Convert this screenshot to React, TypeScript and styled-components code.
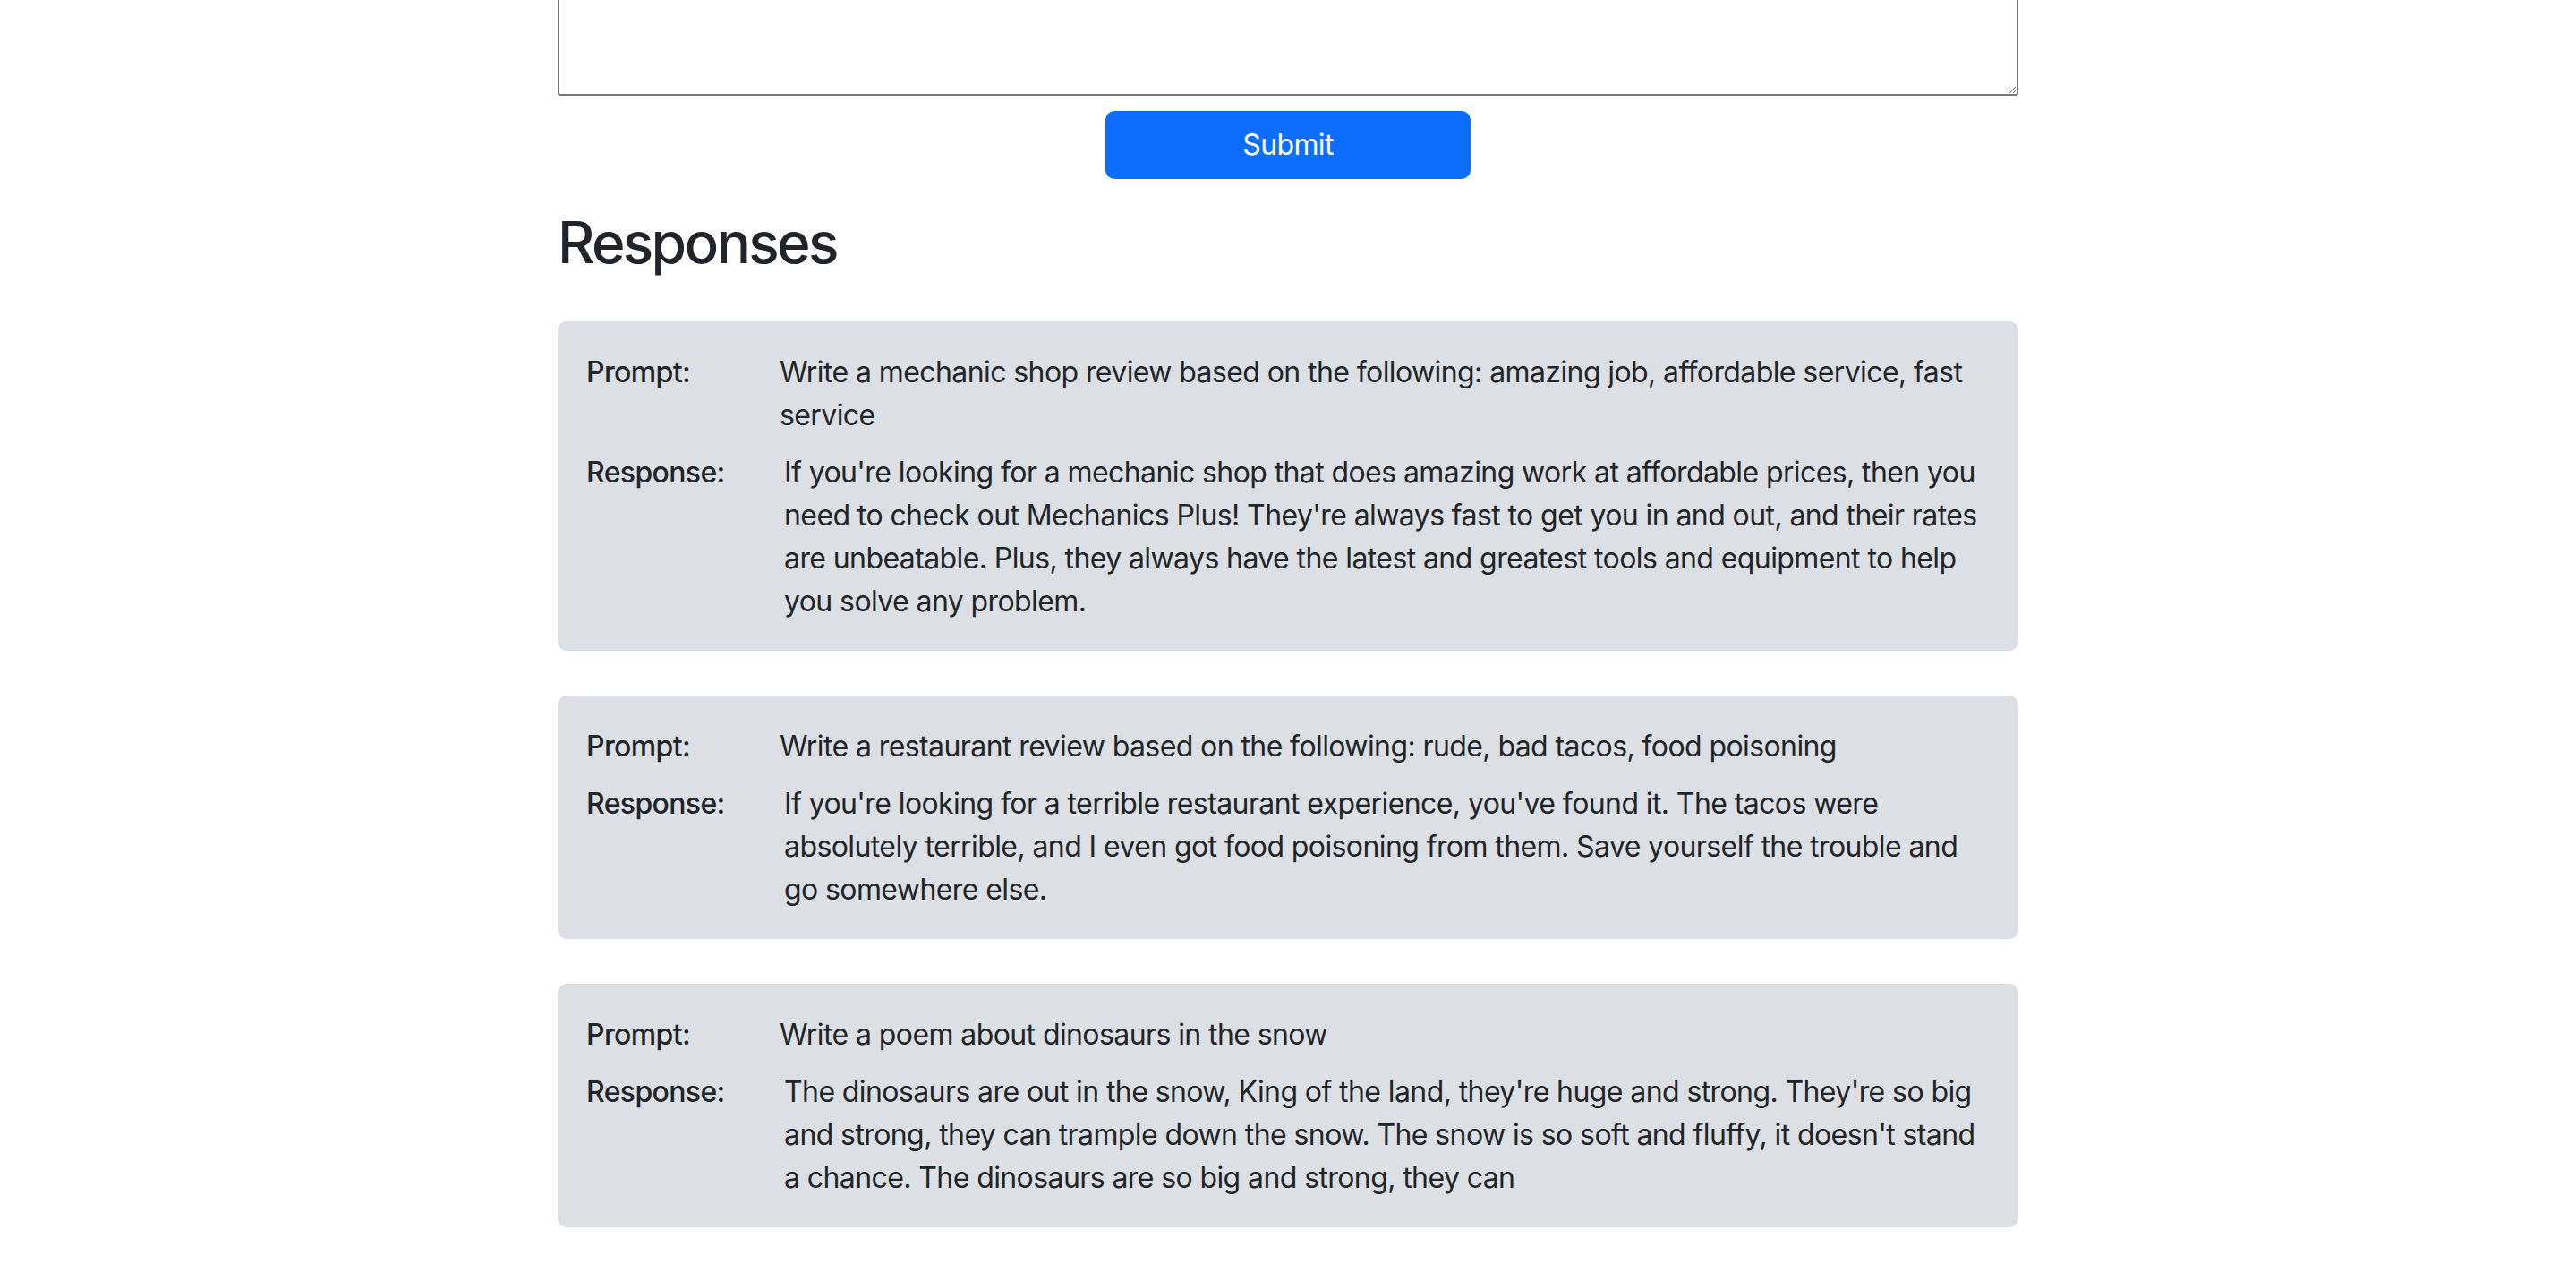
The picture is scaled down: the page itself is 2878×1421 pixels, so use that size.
import React from "react";
import styled, { createGlobalStyle } from "styled-components";

const GlobalStyle = createGlobalStyle`
  html, body {
    margin: 0;
    padding: 0;
    background: #ffffff;
  }
  body {
    font-family: Inter, "Noto Sans", "Liberation Sans", sans-serif;
    color: #212529;
    letter-spacing: -0.037em;
    overflow: hidden;
  }
  * { box-sizing: border-box; }
`;

const Page = styled.main`
  width: 1632px;
  margin: -193px auto 0;
  display: flex;
  flex-direction: column;
`;

const Form = styled.form`
  display: flex;
  flex-direction: column;
  align-items: center;
  gap: 17px;
`;

const PromptInput = styled.textarea`
  display: block;
  width: 100%;
  height: 300px;
  border: 2px solid #767676;
  border-radius: 3px;
  font: inherit;
  font-size: 26px;
  padding: 4px;
  resize: vertical;
  background: #ffffff;
`;

const SubmitButton = styled.button`
  width: 408px;
  height: 76px;
  border: none;
  border-radius: 10px;
  background: #0d6efd;
  color: #ffffff;
  font-family: inherit;
  font-size: 32px;
  font-weight: 400;
  letter-spacing: -0.02em;
  line-height: 1.5;
  cursor: pointer;
`;

const Heading = styled.h2`
  margin: 33px 0 49px;
  font-size: 64px;
  font-weight: 500;
  line-height: 1.2;
  letter-spacing: -0.042em;
  color: #212529;
`;

const CardList = styled.section`
  display: flex;
  flex-direction: column;
  gap: 50px;
`;

const Card = styled.article`
  background: #dcdfe3;
  border-radius: 10px;
  padding: 33px 32px 31px;
  display: flex;
  flex-direction: column;
  gap: 16px;
`;

const Row = styled.div<{ $labelWidth: number }>`
  display: grid;
  grid-template-columns: ${(p) => p.$labelWidth}px 1fr;
  font-size: 32px;
  line-height: 48px;
`;

const Label = styled.span`
  font-weight: 500;
  letter-spacing: -0.02em;
`;

const Value = styled.span`
  font-weight: 400;
`;

const items = [
  {
    prompt:
      "Write a mechanic shop review based on the following: amazing job, affordable service, fast service",
    response:
      "If you're looking for a mechanic shop that does amazing work at affordable prices, then you need to check out Mechanics Plus! They're always fast to get you in and out, and their rates are unbeatable. Plus, they always have the latest and greatest tools and equipment to help you solve any problem.",
  },
  {
    prompt:
      "Write a restaurant review based on the following: rude, bad tacos, food poisoning",
    response:
      "If you're looking for a terrible restaurant experience, you've found it. The tacos were absolutely terrible, and I even got food poisoning from them. Save yourself the trouble and go somewhere else.",
  },
  {
    prompt: "Write a poem about dinosaurs in the snow",
    response:
      "The dinosaurs are out in the snow, King of the land, they're huge and strong. They're so big and strong, they can trample down the snow. The snow is so soft and fluffy, it doesn't stand a chance. The dinosaurs are so big and strong, they can",
  },
];

export default function App() {
  return (
    <>
      <GlobalStyle />
      <Page>
        <Form onSubmit={(e) => e.preventDefault()}>
          <PromptInput aria-label="Prompt" />
          <SubmitButton type="submit">Submit</SubmitButton>
        </Form>
        <Heading>Responses</Heading>
        <CardList>
          {items.map((item, i) => (
            <Card key={i}>
              <Row $labelWidth={216}>
                <Label>Prompt:</Label>
                <Value>{item.prompt}</Value>
              </Row>
              <Row $labelWidth={221}>
                <Label>Response:</Label>
                <Value>{item.response}</Value>
              </Row>
            </Card>
          ))}
        </CardList>
      </Page>
    </>
  );
}
